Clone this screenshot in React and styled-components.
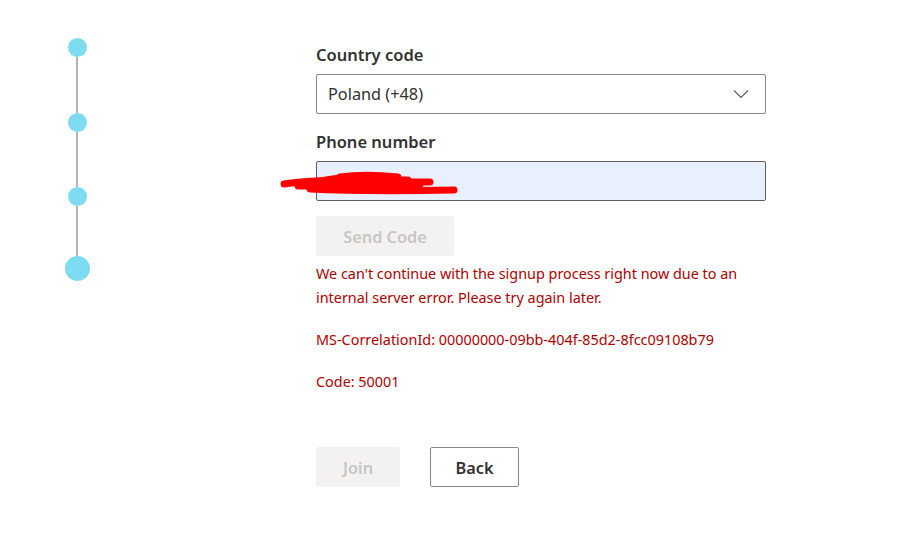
import styled, { createGlobalStyle } from "styled-components";

const Global = createGlobalStyle`
  html, body { margin: 0; padding: 0; background: #ffffff; }
  body { font-family: "Noto Sans", "Open Sans", sans-serif; }
`;

const Page = styled.div`
  width: 903px;
  height: 535px;
  display: flex;
  flex-direction: row;
  align-items: flex-start;
  overflow: hidden;
`;

const Stepper = styled.div`
  width: 90px;
  padding: 38px 0 0 64px;
  display: flex;
  flex-direction: column;
  align-items: center;
  box-sizing: border-box;
`;

const Dot = styled.div`
  width: ${(p) => (p.$big ? 25 : 19)}px;
  height: ${(p) => (p.$big ? 25 : 19)}px;
  border-radius: 50%;
  background: #7ddcf1;
  flex-shrink: 0;
`;

const Connector = styled.div`
  width: 2px;
  height: ${(p) => p.$h}px;
  background: #b3b3b3;
`;

const Form = styled.div`
  margin-left: 226px;
  padding-top: 43px;
  width: 450px;
  display: flex;
  flex-direction: column;
  color: #323130;
`;

const Label = styled.div`
  font-size: 16.5px;
  font-weight: 600;
  line-height: 24px;
  margin-bottom: 7px;
`;

const Select = styled.div`
  height: 40px;
  border: 1px solid #8a8886;
  border-radius: 2px;
  box-sizing: border-box;
  display: flex;
  align-items: center;
  justify-content: space-between;
  padding: 0 16px 0 11px;
  font-size: 16.3px;
  color: #323130;
  margin-bottom: 16px;
`;

const FieldWrap = styled.div`
  position: relative;
  margin-bottom: 15px;
`;

const Input = styled.div`
  height: 40px;
  border: 1px solid #605e5c;
  border-radius: 2px;
  box-sizing: border-box;
  background: #e8f0fe;
`;

const Scribble = styled.svg`
  position: absolute;
  left: -36px;
  top: 8px;
`;

const Button = styled.div`
  height: 40px;
  width: ${(p) => p.$w}px;
  box-sizing: border-box;
  border-radius: 2px;
  display: flex;
  align-items: center;
  justify-content: center;
  padding-top: 1px;
  font-size: 16.3px;
  font-weight: 600;
  background: ${(p) => (p.$disabled ? "#f3f2f1" : "#ffffff")};
  color: ${(p) => (p.$disabled ? "#c8c6c4" : "#323130")};
  border: ${(p) => (p.$disabled ? "none" : "1px solid #8a8886")};
`;

const ErrorText = styled.div`
  margin-top: 6px;
  font-size: 14.4px;
  line-height: 24px;
  color: #b00000;
  width: 450px;
`;

const ErrorPara = styled.p`
  margin: 0 0 ${(p) => p.$gap}px 0;
`;

const Actions = styled.div`
  margin-top: 53px;
  display: flex;
  gap: 30px;
`;

export default function App() {
  return (
    <>
      <Global />
      <Page>
        <Stepper>
          <Dot />
          <Connector $h={56} />
          <Dot />
          <Connector $h={55} />
          <Dot />
          <Connector $h={50} />
          <Dot $big />
        </Stepper>
        <Form>
          <Label>Country code</Label>
          <Select>
            <span>Poland (+48)</span>
            <svg width="16" height="10" viewBox="0 0 16 10">
              <path d="M1 1.5 L8 8.5 L15 1.5" fill="none" stroke="#605e5c" strokeWidth="1.2" />
            </svg>
          </Select>
          <Label>Phone number</Label>
          <FieldWrap>
            <Input />
            <Scribble width="180" height="28" viewBox="0 0 180 28">
              <path
                d="M4 15 C30 11 60 11 90 10 L128 11 M18 17 C60 16 100 15 140 16 M40 12 C60 8 80 6 110 9 M30 20 C70 22 120 22 174 21 M60 8 C80 5 100 6 118 8 M100 13 L150 13"
                fill="none"
                stroke="#ff0000"
                strokeWidth="7"
                strokeLinecap="round"
              />
            </Scribble>
          </FieldWrap>
          <Button $w={138} $disabled>Send Code</Button>
          <ErrorText>
            <ErrorPara $gap={18}>
              We can't continue with the signup process right now due to an internal server error. Please try again later.
            </ErrorPara>
            <ErrorPara $gap={18}>MS-CorrelationId: 00000000-09bb-404f-85d2-8fcc09108b79</ErrorPara>
            <ErrorPara $gap={0}>Code: 50001</ErrorPara>
          </ErrorText>
          <Actions>
            <Button $w={84} $disabled>Join</Button>
            <Button $w={89}>Back</Button>
          </Actions>
        </Form>
      </Page>
    </>
  );
}
